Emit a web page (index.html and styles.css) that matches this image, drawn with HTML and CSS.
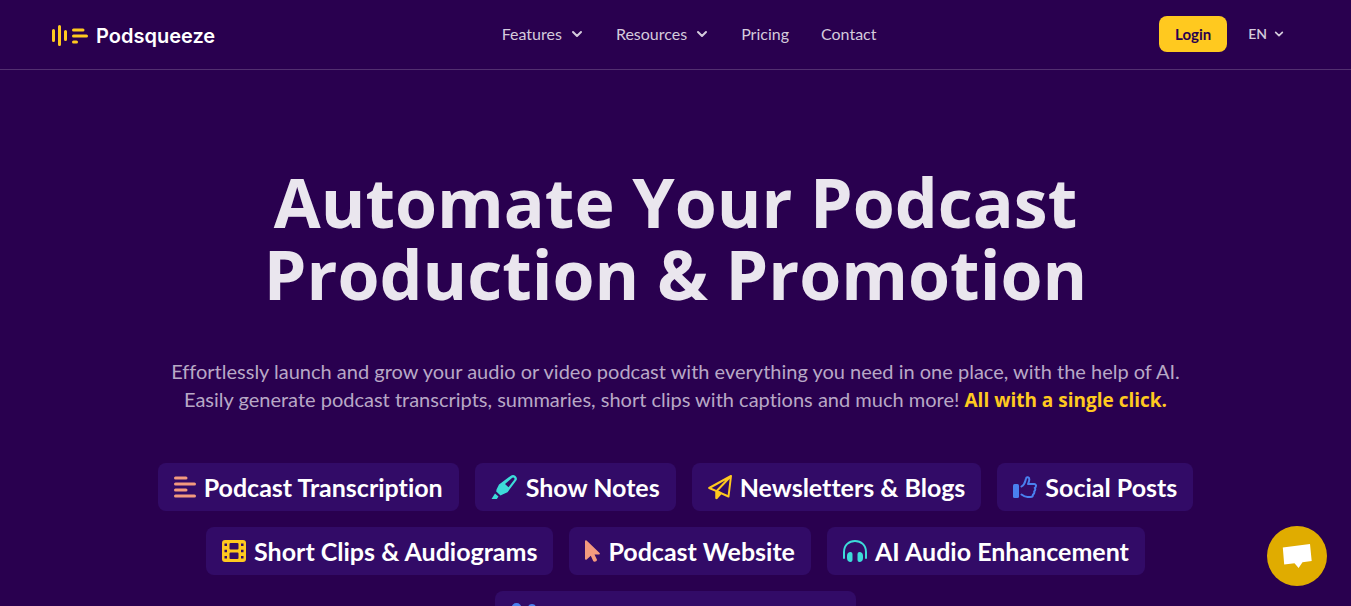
FILE: index.html
```html
<!DOCTYPE html>
<html lang="en">
<head>
    <meta charset="UTF-8">
    <meta name="viewport" content="width=device-width, initial-scale=1.0">
    <title>Podsqueeze</title>
    <link rel="stylesheet" href="styles.css">
</head>
<body>
    <header class="header">
        <a href="#" class="logo">
            <svg width="36" height="22" viewBox="0 0 36 22" fill="none" stroke="#ffc91f" stroke-width="3" stroke-linecap="round">
                <path d="M1.500 5.500v10M7.500 1.500v18M13.500 6.500v8M21.500 5h9.500M21.500 11h13M21.500 17h3"/>
            </svg>
            <span>Podsqueeze</span>
        </a>
        <nav class="nav">
            <button class="nav-item" type="button">Features
                <svg class="chevron" viewBox="0 0 14 14"><path d="M3 5l4 4 4-4"/></svg>
            </button>
            <button class="nav-item" type="button">Resources
                <svg class="chevron" viewBox="0 0 14 14"><path d="M3 5l4 4 4-4"/></svg>
            </button>
            <a class="nav-item" href="#">Pricing</a>
            <a class="nav-item" href="#">Contact</a>
        </nav>
        <div class="actions">
            <button class="login" type="button">Login</button>
            <button class="language" type="button">EN
                <svg class="chevron-small" viewBox="0 0 12 12"><path d="M2 4l4 4 4-4"/></svg>
            </button>
        </div>
    </header>

    <main class="hero">
        <h1>Automate Your Podcast<br>Production &amp; Promotion</h1>
        <p class="intro">Effortlessly launch and grow your audio or video podcast with everything you need in one place, with the help of AI.<br>Easily generate podcast transcripts, summaries, short clips with captions and much more! <strong>All with a single click.</strong></p>

        <ul class="chips">
            <li class="chip">
                <svg class="pink" width="22" height="24" viewBox="0 0 22 24" fill="none" stroke="currentColor" stroke-width="3" stroke-linecap="round">
                    <path d="M1.500 3H12M1.500 9H20.500M1.500 15H12M1.500 21H20.500"/>
                </svg>
                Podcast Transcription
            </li>
            <li class="chip">
                <svg class="teal" width="27" height="26" viewBox="0 0 27 26">
                    <path fill="currentColor" fill-rule="evenodd" d="M5.500 15.500L8 10.500 19.500 2Q22 .2 24.200 1.800Q27 4 25.300 6.600L16.500 18.200L11.500 20.500L9.500 21.500L5.200 17.500ZM14 10L17.500 13.200L23.200 5.800Q24 4.600 22.900 3.800Q22 3 21 3.900ZM4 19.500L7.500 22.500L5.800 25H.5Z"/>
                </svg>
                Show Notes
            </li>
            <li class="chip">
                <svg class="yellow" width="24" height="26" viewBox="0 0 24 26" fill="none" stroke="currentColor" stroke-width="2" stroke-linejoin="round">
                    <path d="M23 2L1.200 14L8.500 17.200L20.500 22.500ZM23 2L8.500 17.200V24L13 19.200"/>
                    <path d="M8.500 17.200V24.200L12.600 19Z" fill="currentColor"/>
                </svg>
                Newsletters &amp; Blogs
            </li>
            <li class="chip">
                <svg class="blue" width="24" height="24" viewBox="0 0 24 24" fill="none" stroke="currentColor" stroke-width="2" stroke-linejoin="round" stroke-linecap="round">
                    <rect x="0" y="9" width="6" height="14" rx="1.500" fill="currentColor" stroke="none"/>
                    <path d="M8.500 11.500C12 9.500 12 7 13 3.500C13.500 1.500 16.500 2 16.300 4.500C16.200 6.500 15.500 7.500 15 9H21Q23.200 9.200 23 11Q22.800 12.500 21.800 13Q23 14.500 21.200 16.500Q21.800 18.500 20 19.500Q20 22 17.500 22H14.500C12 22 10.500 21 8.500 19.500"/>
                </svg>
                Social Posts
            </li>
            <li class="chip">
                <svg class="yellow" width="24" height="22" viewBox="0 0 24 22">
                    <path fill="currentColor" fill-rule="evenodd" d="M3 0H21Q24 0 24 3V19Q24 22 21 22H3Q0 22 0 19V3Q0 0 3 0ZM8.500 3Q7.500 3 7.500 4V8.500Q7.500 9.500 8.500 9.500H15.500Q16.500 9.500 16.500 8.500V4Q16.500 3 15.500 3ZM8.500 12.500Q7.500 12.500 7.500 13.500V18Q7.500 19 8.500 19H15.500Q16.500 19 16.500 18V13.500Q16.500 12.500 15.500 12.500ZM2.500 3.500V6H5V3.500ZM2.500 9.700V12.300H5V9.700ZM2.500 16V18.500H5V16ZM19 3.500V6H21.500V3.500ZM19 9.700V12.300H21.500V9.700ZM19 16V18.500H21.500V16Z"/>
                </svg>
                Short Clips &amp; Audiograms
            </li>
            <li class="chip">
                <svg class="pink" width="15" height="22" viewBox="0 0 15 22">
                    <path fill="currentColor" d="M0 1.200Q.3-.2 1.600.6L14.600 13Q15.400 14.300 14 14.600H9.500L12 19.800Q12 20.700 11.200 21.200L9.500 21.800Q8.600 21.700 8.200 21L5.800 15.700L1.700 19.500Q.3 20.300 0 19Z"/>
                </svg>
                Podcast Website
            </li>
            <li class="chip">
                <svg class="teal" width="24" height="22" viewBox="0 0 24 22">
                    <path d="M1 18V12C1 5 6 1 12 1S23 5 23 12V18" fill="none" stroke="currentColor" stroke-width="2" stroke-linecap="round"/>
                    <path fill="currentColor" d="M7 12H7.500Q9.500 12 9.500 14V20Q9.500 22 7.500 22H7Q4 21.500 4 18V16Q4 12.500 7 12ZM17 12H16.500Q14.500 12 14.500 14V20Q14.500 22 16.500 22H17Q20 21.500 20 18V16Q20 12.500 17 12Z"/>
                </svg>
                AI Audio Enhancement
            </li>
            <li class="chip chip-wide">
                <svg class="blue" width="28" height="24" viewBox="0 0 28 24" fill="currentColor">
                    <circle cx="5.500" cy="5" r="5"/>
                    <circle cx="21" cy="5" r="4"/>
                    <path d="M0 24Q0 12 5.500 12T14 24ZM16 24Q16 11 21 11T28 24Z"/>
                </svg>
            </li>
        </ul>
    </main>

    <button class="chat" type="button" aria-label="Chat">
        <svg width="30" height="26" viewBox="0 0 30 26">
            <path fill="#fff" d="M.8 4.500L28 1L29.700 18L20.500 19.200L16.600 25L12.500 20.200L2.200 21.500Z"/>
        </svg>
    </button>
</body>
</html>
```
FILE: styles.css
```css
* {
    box-sizing: border-box;
}
body {
    margin: 0;
    height: 100vh;
    overflow: hidden;
    background-color: #29004f;
    color: #fff;
    font-family: Lato, sans-serif;
    font-variant-ligatures: none;
}
a {
    color: inherit;
    text-decoration: none;
}
button {
    border: none;
    background: none;
    color: inherit;
    font-family: inherit;
    cursor: pointer;
}
.header {
    display: flex;
    align-items: center;
    justify-content: space-between;
    height: 70px;
    padding: 0 67px 2px 52px;
    border-bottom: 1px solid #522f70;
}
.logo {
    display: flex;
    align-items: center;
    gap: 8px;
    padding: 4px 4px 0 0;
    font-family: Inter, sans-serif;
    font-size: 20px;
    font-weight: 600;
}
.nav {
    display: flex;
    align-items: center;
    gap: 32px;
}
.nav-item {
    display: flex;
    align-items: center;
    gap: 8px;
    padding: 0;
    color: #d4cbdc;
    font-size: 16px;
    line-height: 24px;
}
.chevron,
.chevron-small {
    width: 14px;
    height: 14px;
    fill: none;
    stroke: currentColor;
    stroke-width: 2;
    stroke-linecap: round;
    stroke-linejoin: round;
}
.chevron-small {
    width: 10px;
    height: 10px;
}
.actions {
    display: flex;
    align-items: center;
    gap: 21px;
}
.login {
    height: 36px;
    padding: 0 16px;
    border-radius: 8px;
    background-color: #ffc91f;
    color: #29004f;
    font-size: 15px;
    font-weight: 700;
}
.language {
    display: flex;
    align-items: center;
    gap: 7px;
    padding: 0;
    color: #d4cbdc;
    font-size: 14px;
    font-weight: 600;
}
.hero {
    padding: 96px 64px 0;
    text-align: center;
}
h1 {
    margin: 0;
    color: #eae6ee;
    font-family: "Open Sans", sans-serif;
    font-size: 68px;
    font-weight: 700;
    line-height: 72px;
}
.intro {
    margin: 47px 0 50px;
    color: #b8a8c6;
    font-size: 20px;
    line-height: 28px;
}
.intro strong {
    color: #ffc91f;
    font-family: "Open Sans", sans-serif;
    font-size: 19px;
    font-weight: 700;
    line-height: 20px;
}
.chips {
    display: flex;
    flex-wrap: wrap;
    justify-content: center;
    gap: 16px;
    max-width: 1152px;
    margin: 0 auto;
    padding: 0;
    list-style: none;
}
.chip {
    display: flex;
    align-items: center;
    gap: 8px;
    height: 48px;
    padding: 0 16px 1px;
    border-radius: 8px;
    background-color: #320b67;
    font-size: 25px;
    font-weight: 700;
}
.chip-wide {
    min-width: 361px;
}
.pink {
    color: #f39a7e;
}
.teal {
    color: #3ddbd9;
}
.yellow {
    color: #ffc91f;
}
.blue {
    color: #4a80f0;
}
.chat {
    position: fixed;
    right: 24px;
    bottom: 20px;
    display: flex;
    align-items: center;
    justify-content: center;
    width: 60px;
    height: 60px;
    padding: 0;
    border-radius: 50%;
    background-color: #e0ac00;
}
```
